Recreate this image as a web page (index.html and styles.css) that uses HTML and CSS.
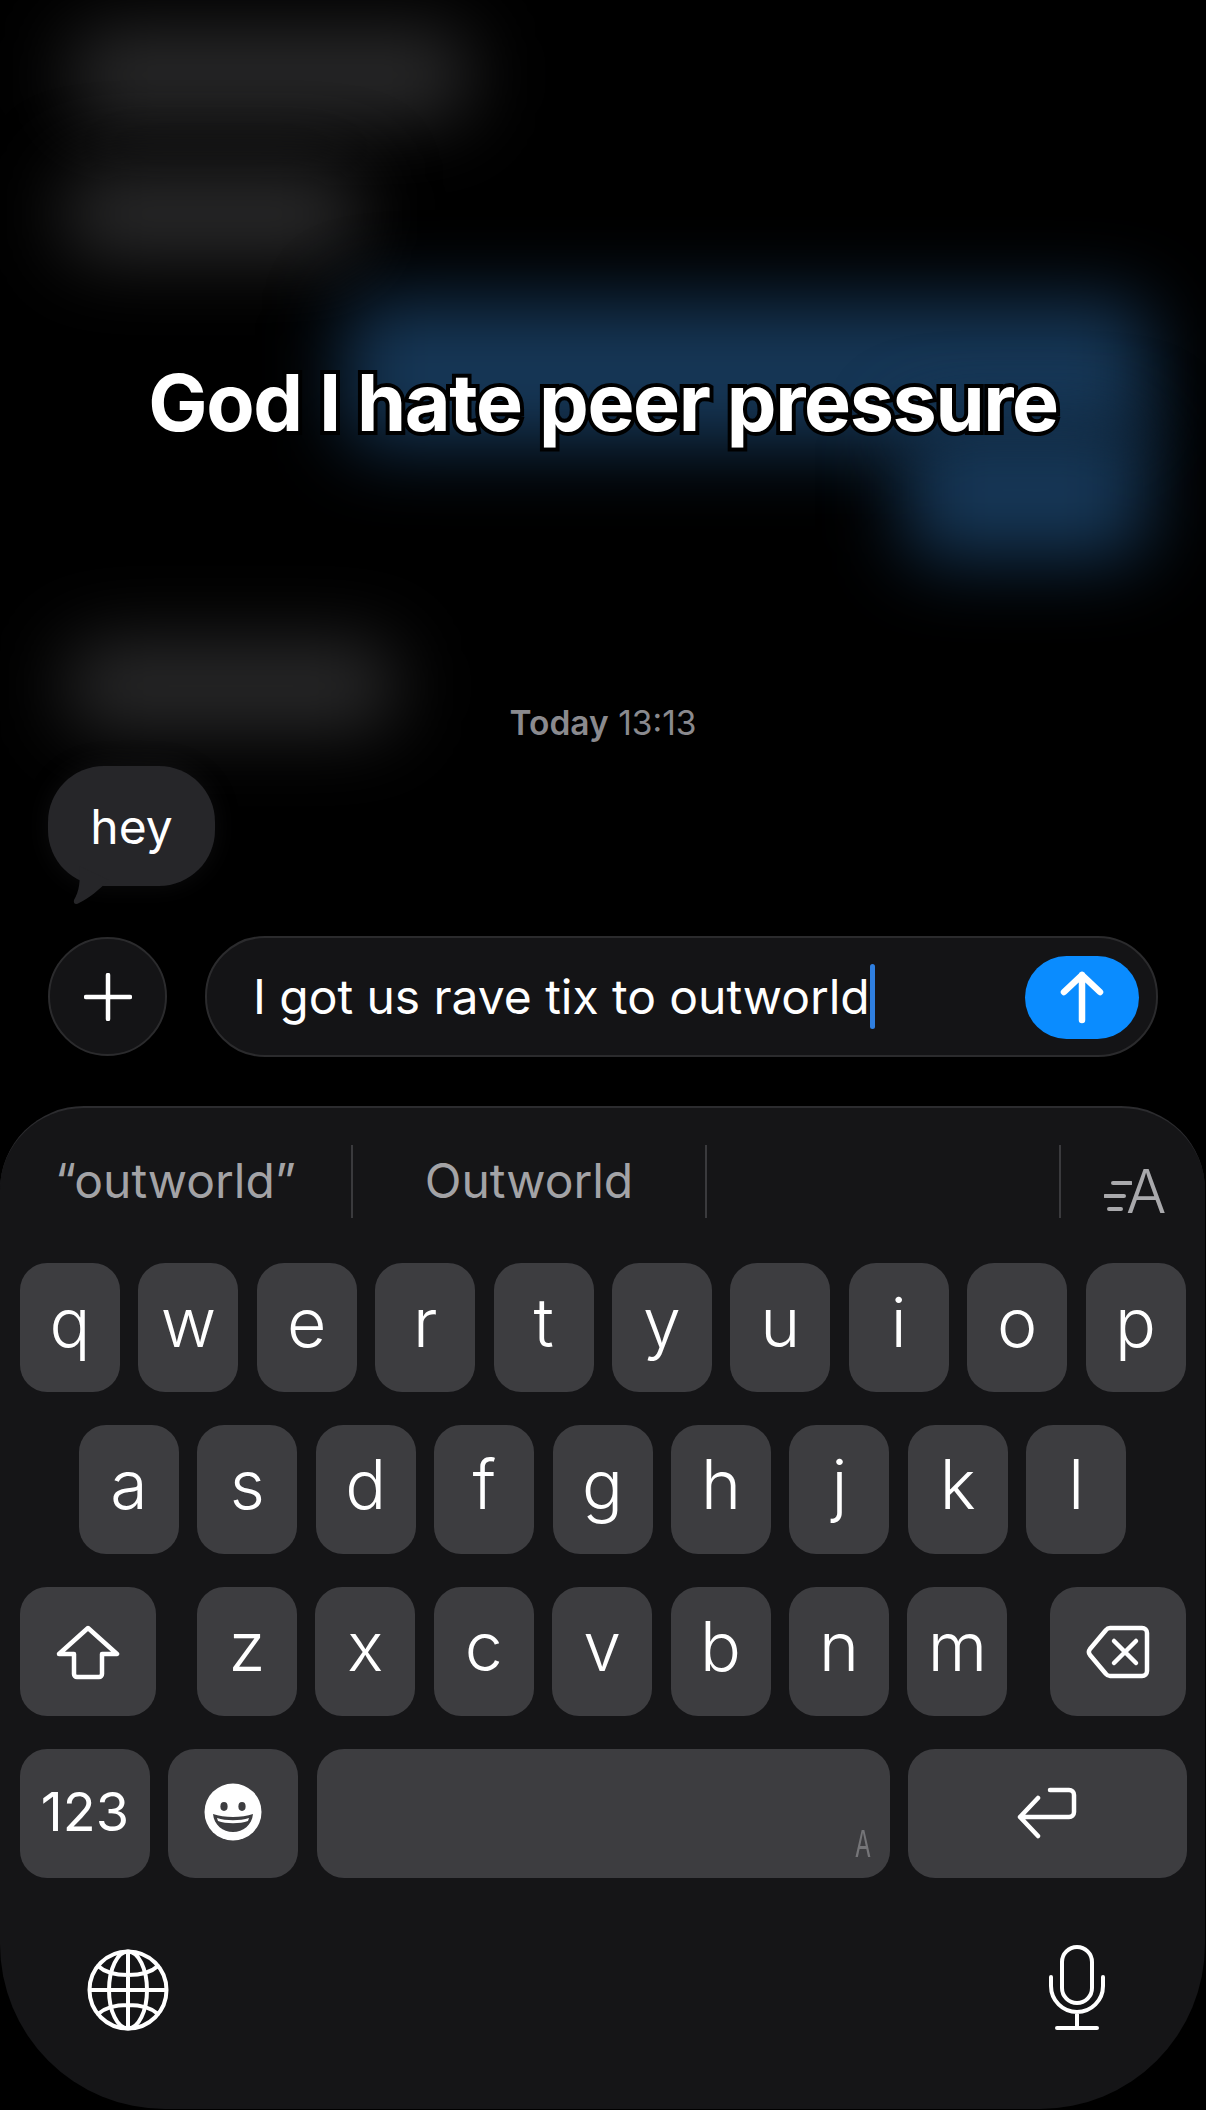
FILE: index.html
```html
<!DOCTYPE html>
<html lang="en">
<head>
    <meta charset="UTF-8">
    <meta name="viewport" content="width=device-width, initial-scale=1.0">
    <title>Messages</title>
    <link rel="stylesheet" href="styles.css">
</head>
<body>

    <main class="screen">
        <!-- older messages, blurred out -->
        <section class="history">
            <div class="smudge smudge-gray smudge-1"></div>
            <div class="smudge smudge-gray smudge-2"></div>
            <div class="smudge smudge-blue smudge-3"></div>
            <div class="smudge smudge-blue smudge-4"></div>
            <div class="smudge smudge-gray smudge-5"></div>
            <h1 class="caption">God I hate peer pressure</h1>
        </section>

        <p class="timestamp"><b>Today</b> 13:13</p>

        <div class="bubble">
            hey
            <svg class="bubble-tail" viewBox="0 0 40 40"><path d="M6 0 C8 14 6 26 1 34 C0 38 3 39 6 37 C16 32 26 24 36 14 Z"/></svg>
        </div>

        <div class="composer">
            <div class="plus-btn">
                <svg width="48" height="48" viewBox="0 0 48 48"><path d="M24 2V46M2 24H46"/></svg>
            </div>
            <div class="input">
                <span class="input-text">I got us rave tix to outworld</span><span class="caret"></span>
                <div class="send-btn">
                    <svg width="46" height="54" viewBox="0 0 46 54"><path d="M23 50V5M5 22L23 5L41 22"/></svg>
                </div>
            </div>
        </div>

        <section class="keyboard">
            <div class="suggestions">
                <div class="suggestion suggestion-1">“outworld”</div>
                <div class="suggestion suggestion-2">Outworld</div>
                <div class="suggestion suggestion-3"></div>
                <div class="suggestion format-btn">
                    <svg class="format-lines" width="28" height="32" viewBox="0 0 28 32"><path d="M9 3H27M1 16H20M5 29H17"/></svg>
                    <span class="format-a">A</span>
                </div>
            </div>

            <div class="key-row">
                <div class="key">q</div><div class="key">w</div><div class="key">e</div><div class="key">r</div><div class="key">t</div>
                <div class="key">y</div><div class="key">u</div><div class="key">i</div><div class="key">o</div><div class="key">p</div>
            </div>
            <div class="key-row row-home">
                <div class="key">a</div><div class="key">s</div><div class="key">d</div><div class="key">f</div><div class="key">g</div>
                <div class="key">h</div><div class="key">j</div><div class="key">k</div><div class="key">l</div>
            </div>
            <div class="key-row">
                <div class="key key-shift">
                    <svg width="64" height="56" viewBox="0 0 64 56"><path d="M32 4L61 30H46V50A3 3 0 0 1 43 53H21A3 3 0 0 1 18 50V30H3Z"/></svg>
                </div>
                <div class="key">z</div><div class="key">x</div><div class="key">c</div><div class="key">v</div>
                <div class="key">b</div><div class="key">n</div><div class="key">m</div>
                <div class="key key-back">
                    <svg width="64" height="54" viewBox="0 0 64 54"><path d="M24 3H56A5 5 0 0 1 61 8V46A5 5 0 0 1 56 51H24A5 5 0 0 1 20 49L4 30A5 5 0 0 1 4 24L20 5A5 5 0 0 1 24 3Z"/><path d="M28 16L50 38M50 16L28 38"/></svg>
                </div>
            </div>
            <div class="key-row">
                <div class="key key-num">123</div>
                <div class="key key-emoji">
                    <svg width="58" height="58" viewBox="0 0 58 58">
                        <circle class="emoji-face" cx="29" cy="29" r="28.5"/>
                        <ellipse class="emoji-dark" cx="20" cy="23.5" rx="3.6" ry="4.4"/>
                        <ellipse class="emoji-dark" cx="38" cy="23.5" rx="3.6" ry="4.4"/>
                        <path class="emoji-dark" d="M9 31C20 35 38 35 49 31C48 42 39 49 29 49C19 49 10 42 9 31Z"/>
                        <path class="emoji-face" d="M13 35C22 38 36 38 45 35L44 38C36 41 22 41 14 38Z"/>
                    </svg>
                </div>
                <div class="key key-space"><span class="space-mark">A</span></div>
                <div class="key key-return">
                    <svg width="62" height="54" viewBox="0 0 62 54"><path d="M34 5H53A5 5 0 0 1 58 10V27A5 5 0 0 1 53 32H4M22 13L4 32L22 51"/></svg>
                </div>
            </div>

            <div class="bottom-row">
                <svg class="globe" width="82" height="82" viewBox="0 0 82 82">
                    <circle cx="41" cy="41" r="38.5"/>
                    <ellipse cx="41" cy="41" rx="19" ry="38.5"/>
                    <path d="M41 3V79M3 41H79M11 17C24 29 58 29 71 17M11 65C24 53 58 53 71 65"/>
                </svg>
                <svg class="mic" width="58" height="88" viewBox="0 0 58 88">
                    <rect x="14" y="3" width="30" height="56" rx="15"/>
                    <path d="M3 33V42A26 26 0 0 0 55 42V33M29 68V84M9 84H49"/>
                </svg>
            </div>
        </section>
    </main>

</body>
</html>
```

FILE: styles.css
```css
html, body {
    margin: 0;
    background-color: #000;
}
body {
    font-family: Inter, "Liberation Sans", sans-serif;
    color: #fff;
}
.screen {
    width: 1206px;
    height: 2110px;
    overflow: hidden;
    display: flex;
    flex-direction: column;
}

/* blurred history */
.history {
    position: relative;
    height: 703px;
    flex-shrink: 0;
}
.smudge {
    position: absolute;
    filter: blur(38px);
    border-radius: 30px;
}
.smudge-gray {
    background-color: #2c2c2d;
}
.smudge-blue {
    background-color: #163757;
}
.smudge-1 {
    left: 70px;
    top: 30px;
    width: 400px;
    height: 90px;
}
.smudge-2 {
    left: 64px;
    top: 170px;
    width: 296px;
    height: 88px;
}
.smudge-3 {
    left: 345px;
    top: 300px;
    width: 805px;
    height: 146px;
}
.smudge-4 {
    left: 905px;
    top: 420px;
    width: 242px;
    height: 140px;
}
.smudge-5 {
    left: 66px;
    top: 643px;
    width: 330px;
    height: 86px;
}
.caption {
    position: absolute;
    left: 0;
    right: 0;
    top: 356px;
    margin: 0;
    text-align: center;
    font-size: 79px;
    line-height: 92px;
    font-weight: 650;
    letter-spacing: -1.4px;
    -webkit-text-stroke: 8px #000;
    paint-order: stroke fill;
    text-shadow: 2px 2px 0 #000;
}

/* message area */
.timestamp {
    margin: 0;
    height: 40px;
    line-height: 40px;
    text-align: center;
    font-size: 33.5px;
    color: #8a8a8e;
    position: relative;
}
.timestamp b {
    font-weight: 600;
}
.bubble {
    position: relative;
    margin: 23px 0 0 48px;
    width: 167px;
    height: 120px;
    box-sizing: border-box;
    border-radius: 56px;
    background-color: #262629;
    box-shadow: 0 0 24px rgba(50, 50, 55, 0.25);
    font-size: 48px;
    display: flex;
    align-items: center;
    justify-content: center;
    flex-shrink: 0;
}
.bubble-tail {
    position: absolute;
    left: 25px;
    top: 100px;
    width: 40px;
    height: 40px;
    fill: #262629;
}

/* input row */
.composer {
    display: flex;
    gap: 38px;
    margin: 50px 48px 0;
    height: 121px;
    flex-shrink: 0;
}
.plus-btn {
    width: 119px;
    height: 119px;
    margin-top: 1px;
    box-sizing: border-box;
    border: 2px solid #2b2b2d;
    border-radius: 50%;
    background-color: #141416;
    display: flex;
    align-items: center;
    justify-content: center;
}
.plus-btn svg {
    fill: none;
    stroke: #fff;
    stroke-width: 4.5;
    stroke-linecap: round;
}
.input {
    flex: 1;
    box-sizing: border-box;
    border: 2px solid #2b2b2d;
    border-radius: 60px;
    background-color: #141416;
    display: flex;
    align-items: center;
    padding-left: 46px;
    padding-right: 17px;
}
.input-text {
    font-size: 48px;
    letter-spacing: -0.05px;
}
.caret {
    width: 5px;
    height: 65px;
    border-radius: 3px;
    background-color: #2f7fe0;
}
.send-btn {
    margin-left: auto;
    width: 114px;
    height: 83px;
    margin-top: 1px;
    border-radius: 42px;
    background-color: #0a8cff;
    display: flex;
    align-items: center;
    justify-content: center;
}
.send-btn svg {
    fill: none;
    stroke: #fff;
    stroke-width: 6.5;
    stroke-linecap: round;
    stroke-linejoin: round;
}

/* keyboard */
.keyboard {
    margin: 49px 1px 0 0;
    height: 1003px;
    flex-shrink: 0;
    box-sizing: border-box;
    padding-top: 37px;
    border-top: 2px solid #2c2c2f;
    border-radius: 84px 84px 165px 165px;
    background-color: #151517;
}
.suggestions {
    display: flex;
    height: 73px;
    margin-bottom: 45px;
    font-size: 48px;
    color: #a3a3a6;
}
.suggestion {
    display: flex;
    align-items: center;
    justify-content: center;
    box-sizing: border-box;
    border-right: 2px solid #3a3a3d;
    padding-bottom: 2px;
}
.suggestion-1 {
    width: 353px;
}
.suggestion-2, .suggestion-3 {
    width: 354px;
}
.format-btn {
    flex: 1;
    border-right: none;
    align-items: flex-end;
    justify-content: flex-start;
    padding: 0 0 0 43px;
}
.format-lines {
    fill: none;
    stroke: #a9a9ac;
    stroke-width: 4;
    stroke-linecap: round;
    margin-bottom: 6px;
}
.format-a {
    font-size: 60px;
    line-height: 54px;
    font-weight: 300;
    color: #a9a9ac;
    margin-left: -6px;
}
.key-row {
    display: flex;
    gap: 18.4px;
    padding: 0 20px;
    margin-bottom: 33px;
}
.row-home {
    padding: 0 79px;
}
.key {
    width: 100px;
    height: 129px;
    box-sizing: border-box;
    padding-bottom: 12px;
    border-radius: 27px;
    background-color: #3d3d40;
    display: flex;
    align-items: center;
    justify-content: center;
    font-size: 68px;
    font-weight: 350;
    flex-shrink: 0;
}
.key svg {
    fill: none;
    stroke: #fff;
    stroke-width: 4.5;
    stroke-linecap: round;
    stroke-linejoin: round;
}
.key-shift, .key-back {
    width: 136px;
    padding-bottom: 0;
}
.key-shift {
    margin-right: 22.6px;
}
.key-back {
    margin-left: 24px;
}
.key-num {
    width: 130px;
    font-size: 54px;
    font-weight: 400;
    padding-bottom: 4px;
}
.key-emoji {
    width: 130px;
    padding-bottom: 4px;
}
.key .emoji-face {
    fill: #fff;
    stroke: none;
}
.key .emoji-dark {
    fill: #3d3d40;
    stroke: none;
}
.key-space {
    width: 573px;
    position: relative;
}
.space-mark {
    position: absolute;
    right: 15px;
    bottom: 16px;
    font-family: "Liberation Mono", monospace;
    font-size: 40px;
    line-height: 30px;
    color: #757578;
    transform: scaleX(0.62);
}
.key-return {
    width: 278.6px;
    padding-bottom: 4px;
}
.bottom-row {
    display: flex;
    justify-content: space-between;
    align-items: flex-start;
    padding: 38px 99px 0 87px;
}
.bottom-row svg {
    fill: none;
    stroke: #fff;
    stroke-width: 4;
    stroke-linecap: round;
}
.mic {
    margin-top: -5px;
}
```
